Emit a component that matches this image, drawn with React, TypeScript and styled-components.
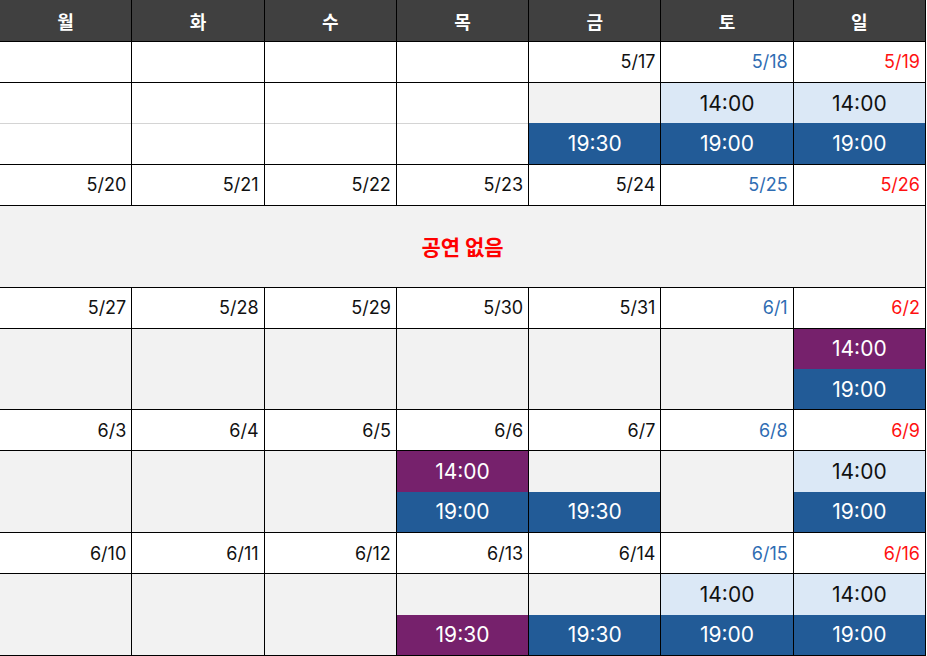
import styled, { createGlobalStyle } from 'styled-components'

const GlobalStyle = createGlobalStyle`
	body {
		margin: 0;
		background: #fff;
		font-family: Inter, "Noto Sans CJK KR", sans-serif;
	}
`

type Tone = 'blue' | 'light' | 'purple'
type Slot = { time: string; tone: Tone } | null
type Day = 'blank' | 'empty' | [Slot, Slot]
type Week = { dates: string[]; days: Day[] | 'none' }

const DAYS = ['월', '화', '수', '목', '금', '토', '일']

const B = (time: string): Slot => ({ time, tone: 'blue' })
const L = (time: string): Slot => ({ time, tone: 'light' })
const P = (time: string): Slot => ({ time, tone: 'purple' })

const weeks: Week[] = [
	{
		dates: ['', '', '', '', '5/17', '5/18', '5/19'],
		days: ['blank', 'blank', 'blank', 'blank', [null, B('19:30')], [L('14:00'), B('19:00')], [L('14:00'), B('19:00')]],
	},
	{ dates: ['5/20', '5/21', '5/22', '5/23', '5/24', '5/25', '5/26'], days: 'none' },
	{
		dates: ['5/27', '5/28', '5/29', '5/30', '5/31', '6/1', '6/2'],
		days: ['empty', 'empty', 'empty', 'empty', 'empty', 'empty', [P('14:00'), B('19:00')]],
	},
	{
		dates: ['6/3', '6/4', '6/5', '6/6', '6/7', '6/8', '6/9'],
		days: ['empty', 'empty', 'empty', [P('14:00'), B('19:00')], [null, B('19:30')], 'empty', [L('14:00'), B('19:00')]],
	},
	{
		dates: ['6/10', '6/11', '6/12', '6/13', '6/14', '6/15', '6/16'],
		days: ['empty', 'empty', 'empty', [null, P('19:30')], [null, B('19:30')], [L('14:00'), B('19:00')], [L('14:00'), B('19:00')]],
	},
]

const toneBg: Record<Tone, string> = { blue: '#225b97', light: '#dbe8f6', purple: '#76216c' }
const toneFg: Record<Tone, string> = { blue: '#fff', light: '#111', purple: '#fff' }
const dateColor = (col: number) => (col === 5 ? '#2f6db3' : col === 6 ? '#ff1111' : '#111')

// header, then per week: date row (1 unit) + show times (2 units)
const Table = styled.div`
	display: grid;
	grid-template-columns: repeat(7, 1fr);
	grid-template-rows: 42px repeat(5, 1fr 2fr);
	width: 926px;
	height: 656px;
`
const Cell = styled.div`
	box-sizing: border-box;
	min-height: 0;
	border-right: 1px solid #000;
	border-bottom: 1px solid #000;
`
const HeadCell = styled(Cell)`
	background: #404040;
	color: #fff;
	display: flex;
	align-items: center;
	justify-content: center;
	font: 700 18px "Noto Sans CJK KR", sans-serif;
`
const DateCell = styled(Cell)<{ $color: string }>`
	padding-right: 5px;
	display: flex;
	align-items: center;
	justify-content: flex-end;
	color: ${p => p.$color};
	font-size: 18px;
	background: #fff;
`
const DayCell = styled(Cell)<{ $blank?: boolean }>`
	display: flex;
	flex-direction: column;
	background: ${p => (p.$blank ? '#fff' : '#f2f2f2')};
`
const SlotBox = styled.div<{ $tone?: Tone; $rule?: boolean }>`
	box-sizing: border-box;
	flex: 1;
	border-top: ${p => (p.$rule ? '1px solid #d4d4d4' : 'none')};
	background: ${p => (p.$tone ? toneBg[p.$tone] : 'transparent')};
	color: ${p => (p.$tone ? toneFg[p.$tone] : 'inherit')};
	display: flex;
	align-items: center;
	justify-content: center;
	font-size: 21px;
`
const NoShow = styled(Cell)`
	grid-column: 1 / -1;
	background: #f2f2f2;
	display: flex;
	align-items: center;
	justify-content: center;
	color: #ff0000;
	font: 700 21px "Noto Sans CJK KR", sans-serif;
`

const DayView = ({ day }: { day: Day }) => {
	if (day === 'blank')
		return (
			<DayCell $blank>
				<SlotBox />
				<SlotBox $rule />
			</DayCell>
		)
	if (day === 'empty') return <DayCell />
	return (
		<DayCell>
			{day.map((s, i) => (
				<SlotBox key={i} $tone={s?.tone}>
					{s?.time}
				</SlotBox>
			))}
		</DayCell>
	)
}

export default function App() {
	return (
		<>
			<GlobalStyle />
			<Table>
				{DAYS.map(d => (
					<HeadCell key={d}>{d}</HeadCell>
				))}
				{weeks.map((w, wi) => [
					...w.dates.map((d, i) => (
						<DateCell key={`d${wi}-${i}`} $color={dateColor(i)}>
							{d}
						</DateCell>
					)),
					...(w.days === 'none'
						? [<NoShow key={`n${wi}`}>공연 없음</NoShow>]
						: w.days.map((day, i) => <DayView key={`s${wi}-${i}`} day={day} />)),
				])}
			</Table>
		</>
	)
}
